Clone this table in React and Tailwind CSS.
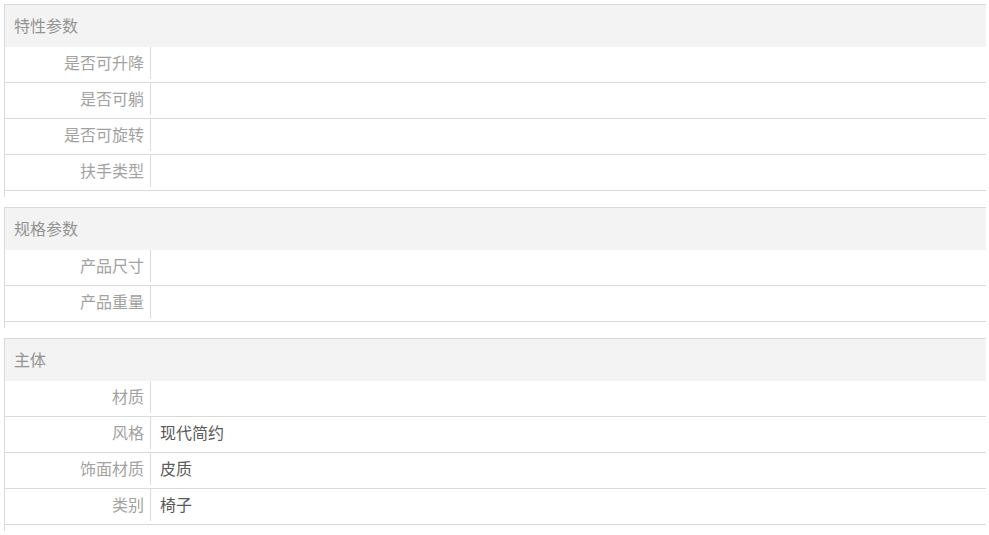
const sections = [
  {
    title: '特性参数',
    rows: [
      { label: '是否可升降', value: '' },
      { label: '是否可躺', value: '' },
      { label: '是否可旋转', value: '' },
      { label: '扶手类型', value: '' },
    ],
  },
  {
    title: '规格参数',
    rows: [
      { label: '产品尺寸', value: '' },
      { label: '产品重量', value: '' },
    ],
  },
  {
    title: '主体',
    rows: [
      { label: '材质', value: '' },
      { label: '风格', value: '现代简约' },
      { label: '饰面材质', value: '皮质' },
      { label: '类别', value: '椅子' },
    ],
  },
];

const ParamSection = ({ title, rows }) => (
  <div className="border-l border-t border-[#dadada] pb-[6px] mb-[10px]">
    <div className="h-[42px] bg-[#f3f3f3] flex items-center pl-[9px] pb-[2px] text-[16px] leading-[20px] text-[#939393]">
      {title}
    </div>
    {rows.map((row) => (
      <div key={row.label} className="h-[36px] border-b border-[#dadada] flex items-start">
        <div className="w-[146px] h-[32px] border-r border-[#dadada] flex items-center justify-end pr-[6px] pb-[2px] text-[16px] leading-[20px] text-[#a2a2a2]">
          {row.label}
        </div>
        <div className="h-[32px] flex items-center pl-[9px] pb-[2px] text-[16px] leading-[20px] text-[#5a5a5a]">
          {row.value}
        </div>
      </div>
    ))}
  </div>
);

export default function App() {
  return (
    <div
      className="bg-white w-[989px] h-[535px] overflow-hidden pt-[4px] pl-[4px] pr-[3px]"
      style={{ fontFamily: '"Noto Sans CJK SC", "Noto Sans", sans-serif' }}
    >
      {sections.map((s) => (
        <ParamSection key={s.title} title={s.title} rows={s.rows} />
      ))}
    </div>
  );
}
